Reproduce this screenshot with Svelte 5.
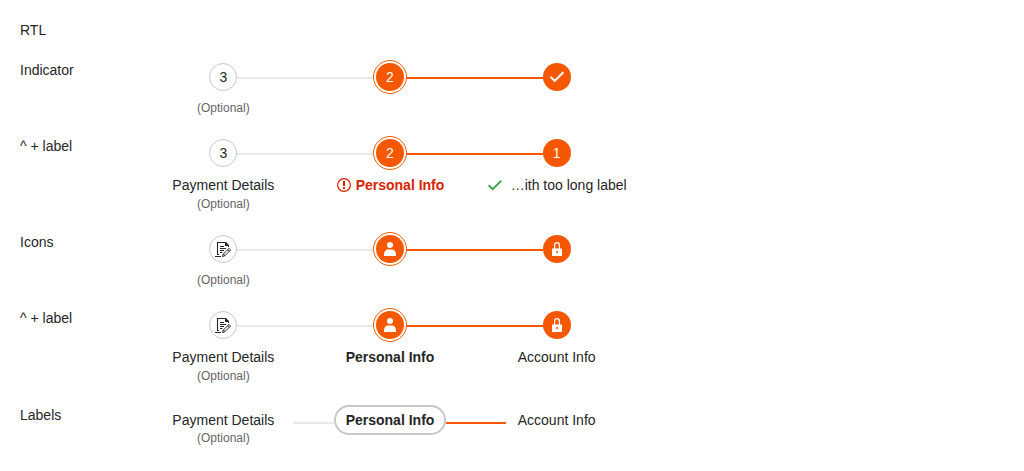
<script>
  const rows = [
    { name: 'Indicator', marks: ['3', '2', 'check'], labels: false },
    { name: '^ + label', marks: ['3', '2', '1'], labels: true, validation: true },
    { name: 'Icons', marks: ['doc', 'user', 'lock'], labels: false },
    { name: '^ + label', marks: ['doc', 'user', 'lock'], labels: true }
  ];
  const texts = ['Payment Details', 'Personal Info', 'Account Info'];
  const states = ['todo', 'active', 'done'];
</script>

{#snippet glyph(kind)}
  {#if kind === 'check'}
    <svg class="glyph" viewBox="0 0 16 16"><path d="M1.5 7.7 5.7 11.9 14.4 3.2" fill="none" stroke="currentColor" stroke-width="2" /></svg>
  {:else if kind === 'doc'}
    <svg class="glyph doc" viewBox="0 0 16 16">
      <path d="M4 13.5H2.5V1.5H11" fill="none" stroke="currentColor" stroke-width="1.1" />
      <path d="M10 1H11L14 4V6H13V5H10Z" fill="currentColor" />
      <path d="M5 5.5H9M5 7.5H11M5 9.5H9M5 11.5H7.5M0 15.5H6" stroke="currentColor" />
      <path d="M7.5 15.5 8.2 13.2 14 7.4 15.6 9 9.8 14.8ZM8.4 13 10 14.6M12.6 8.8 14.2 10.4" fill="none" stroke="currentColor" stroke-width="1" />
    </svg>
  {:else if kind === 'user'}
    <svg class="glyph" viewBox="0 0 16 16"><circle cx="8" cy="4" r="3" fill="currentColor" /><path d="M2 15V13.5C2.2 10.2 3.8 8.5 6 8.5H10C12.2 8.5 13.8 10.2 14 13.5V15Z" fill="currentColor" /></svg>
  {:else if kind === 'lock'}
    <svg class="glyph" viewBox="0 0 16 16">
      <path d="M5.6 8V4.3Q5.6 1.6 8 1.6T10.4 4.3V8" fill="none" stroke="currentColor" stroke-width="1.2" />
      <path fill-rule="evenodd" d="M3 8Q3 7.5 3.5 7.5H12.5Q13 7.5 13 8V15H3ZM7.2 10V12H8.8V10Z" fill="currentColor" />
    </svg>
  {:else}
    {kind}
  {/if}
{/snippet}

<main>
  <div class="title">RTL</div>
  {#each rows as row}
    <section class="row">
      <div class="name">{row.name}</div>
      <div class="steps">
        {#each row.marks as mark, i}
          <div class="step">
            <div class="track">
              <span class="line" class:none={i === 0} class:orange={i === 2}></span>
              <span class="marker {states[i]}"><span class="disc">{@render glyph(mark)}</span></span>
              <span class="line" class:none={i === 2} class:orange={i === 1}></span>
            </div>
            {#if row.labels}
              <div class="label" class:bold={i === 1} class:error={row.validation && i === 1} class:long={row.validation && i === 2}>
                {#if row.validation && i === 1}
                  <svg class="status" viewBox="0 0 14 14"><circle cx="7" cy="7" r="6.4" fill="none" stroke="currentColor" stroke-width="1.2" /><path d="M7 3V8M7 9V11" stroke="currentColor" stroke-width="2" /></svg>
                {/if}
                {#if row.validation && i === 2}
                  <svg class="status valid" viewBox="0 0 14 14"><path d="M.7 7.2 4.7 11.2 13.3 2.6" fill="none" stroke="currentColor" stroke-width="2" /></svg>
                  <span>…ith too long label</span>
                {:else}
                  <span>{texts[i]}</span>
                {/if}
              </div>
            {/if}
            {#if i === 0}<div class="optional" class:after={row.labels}>(Optional)</div>{/if}
          </div>
        {/each}
      </div>
    </section>
  {/each}
  <section class="row textual">
    <div class="name">Labels</div>
    <div class="steps">
      <div class="step">
        <div class="textrow"><span class="end"></span><span>{texts[0]}</span><span class="end"><span class="dash start"></span></span></div>
        <div class="optional tight">(Optional)</div>
      </div>
      <div class="step">
        <div class="textrow"><span class="dash"></span><span class="pill">{texts[1]}</span><span class="dash orange"></span></div>
      </div>
      <div class="step">
        <div class="textrow"><span class="end"><span class="dash orange finish"></span></span><span>{texts[2]}</span><span class="end"></span></div>
      </div>
    </div>
  </section>
</main>

<style>
  :global(body) { margin: 0; background: #fff; }
  main {
    box-sizing: border-box;
    height: 471px;
    padding: 20px;
    overflow: hidden;
    font: 14px/20px "Liberation Sans", Arial, sans-serif;
    color: #262626;
  }
  .title { margin-bottom: 20px; }
  .row { display: grid; grid-template-columns: 120px 500px; padding-bottom: 20px; }
  .steps { display: grid; grid-template-columns: repeat(3, 1fr); }
  .step { display: flex; flex-direction: column; min-width: 0; }
  .track { display: flex; align-items: center; height: 34px; }
  .line { flex: 1; height: 2px; margin-top: 2px; background: #e9e9e9; }
  .line.orange, .dash.orange { background: #f55800; }
  .line.none { background: none; }
  .marker { box-sizing: border-box; display: flex; border-radius: 50%; }
  .active { padding: 2px; border: 1px solid #f55800; }
  .disc {
    box-sizing: border-box;
    display: flex;
    align-items: center;
    justify-content: center;
    width: 28px;
    height: 28px;
    border-radius: 50%;
    background: #f55800;
    color: #fff;
  }
  .todo .disc { border: 1px solid #c8c8c8; background: #fff; color: #262626; }
  .glyph { display: block; width: 16px; height: 16px; }
  .label { display: flex; align-items: center; justify-content: center; height: 20px; margin-top: 5px; white-space: nowrap; }
  .bold { font-weight: bold; }
  .error { gap: 5px; padding-left: 1px; color: #d92300; }
  .long { padding-left: 1px; }
  .status { width: 14px; height: 14px; flex: none; }
  .valid { margin-right: 9px; color: #3ca34d; }
  .optional { margin-top: 6px; font-size: 12px; line-height: 16px; text-align: center; color: #666; }
  .optional.after { margin-top: 1px; }
  .optional.tight { margin-top: -5px; }
  .textual { margin-top: 1px; }
  .textrow { display: flex; align-items: center; height: 30px; white-space: nowrap; }
  .pill { box-sizing: border-box; height: 30px; padding: 3px 10px; border: 2px solid #c8c8c8; border-radius: 15px; font-weight: bold; }
  .dash { flex: 1; height: 2px; margin-top: 6px; background: #e9e9e9; }
  .end { display: flex; flex: 1; }
  .start { margin-left: 19px; }
  .finish { margin-right: 11.5px; }
</style>
